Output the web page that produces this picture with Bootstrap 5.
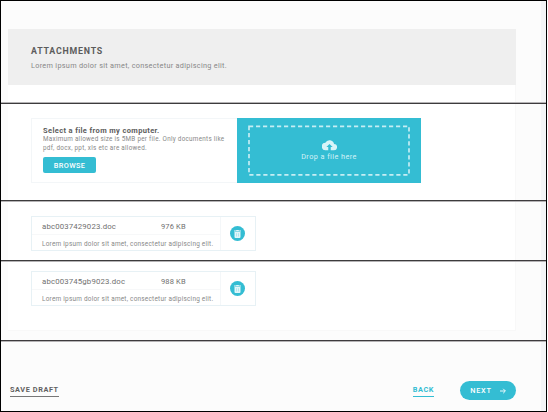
<!DOCTYPE html>
<html lang="en">
<head>
<meta charset="utf-8">
<meta name="viewport" content="width=device-width, initial-scale=1">
<title>Attachments</title>
<link href="https://cdn.jsdelivr.net/npm/bootstrap@5.3.0/dist/css/bootstrap.min.css" rel="stylesheet">
<style>
:root{--teal:#34bdd3;--soft:#888}
body{width:548px;height:412px;overflow:hidden;background:#fff;font-family:Roboto,"Liberation Sans",sans-serif;font-size:7px;line-height:9px;color:var(--soft)}
.frame{width:547px;height:412px;border:1px solid #000;background:#fcfcfc}
.band{padding-left:7px;border-right:5px solid #f3f5f7;white-space:nowrap}
.band-head{height:101px;padding-top:28px}
.band-pick{height:96px}
.band-first{height:58px}
.band-second{height:78px}
.band-foot{height:69px;padding:39px 25px 0 9px}
.rule{height:2px;background:#3d3b3d;border-bottom:1px solid #b5b3b5}
.rule-up{border-bottom:0;border-top:1px solid #b5b3b5}
.panel{width:508px;background:#fff;border-right:1px solid #f8f8f8;padding-left:23px}
.panel-gap{height:17px}
.panel-title{height:56px;width:508px;background:#efefef;padding:17px 0 0 23px}
.panel-title h1{font-size:8.8px;line-height:10px;font-weight:700;letter-spacing:.8px;color:#5c5c5c;margin:0 0 6px}
.panel-title p{font-size:7.3px;line-height:8px;letter-spacing:.29px}
.panel-pick{padding-top:14px}
.panel-file{padding-top:14px}
.panel-end{height:69px;padding-top:9px;border-bottom:1px solid #f8f8f8}
.pick{width:206px;height:65px;border:1px solid #f3f6f8;border-right:0;padding:7px 0 0 11px}
.pick h2{font-size:7.5px;line-height:9px;font-weight:700;letter-spacing:.36px;color:#5c5c5c;margin:0}
.pick p{font-size:6.3px;line-height:9px;letter-spacing:.28px}
.btn-teal{--bs-btn-bg:var(--teal);--bs-btn-color:#fff;--bs-btn-border-width:0;--bs-btn-hover-bg:#2aabc0;--bs-btn-hover-color:#fff;font-weight:500}
.btn-browse{width:53px;height:16px;border-radius:2px;margin-top:4px;font-size:7.3px;line-height:17px;letter-spacing:.4px}
.drop{width:184px;height:65px;background:var(--teal);color:#d5f2f7;padding:7px 11px}
.drop-edge{height:51px}
.drop-text{font-size:7.3px;line-height:11px;letter-spacing:.42px}
.file{width:225px;height:35px;border:1px solid #e7f1f5}
.file-info{width:189px;border-right:1px solid #f4f7f9}
.file-top{height:18px;border-bottom:1px solid #f7f8f9;padding-left:10px;font-size:7.5px;line-height:19px;letter-spacing:.15px;color:#707070}
.file-name{width:119px;font-size:7.8px}
.file-note{padding-left:10px;font-size:6.4px;line-height:18px;letter-spacing:.25px;height:15px}
.file-bin{padding-right:2px}
.btn-bin{width:15px;height:15px}
.foot-link{font-size:7.3px;line-height:9px;font-weight:700;text-decoration:none;border-bottom:1px solid #777;color:#606060;padding-bottom:2px;letter-spacing:.6px}
.foot-back{color:var(--teal);border-color:var(--teal);margin-right:26px}
.btn-next{width:56px;height:19px;font-size:7.3px;line-height:19px;letter-spacing:.75px}
</style>
<script src="https://cdn.jsdelivr.net/npm/bootstrap@5.3.0/dist/js/bootstrap.bundle.min.js"></script>
</head>
<body>
<main class="frame">
  <header class="band band-head">
    <div class="panel-title"><h1>ATTACHMENTS</h1><p class="m-0">Lorem ipsum dolor sit amet, consectetur adipiscing elit.</p></div>
    <div class="panel panel-gap"></div>
  </header>
  <div class="rule rule-up"></div>
  <section class="band band-pick">
    <div class="panel panel-pick h-100 d-flex align-items-start">
      <div class="pick">
        <h2>Select a file from my computer.</h2>
        <p class="m-0">Maximum allowed size is 5MB per file. Only documents like<br>pdf, docx, ppt, xls etc are allowed.</p>
        <button class="btn btn-teal btn-browse p-0 d-block">BROWSE</button>
      </div>
      <div class="drop">
        <div class="drop-edge position-relative d-flex flex-column align-items-center justify-content-center">
          <svg class="position-absolute top-0 start-0" width="162" height="51" fill="none" stroke="#c5edf4" stroke-width="1.7"><rect x="1" y="1.3" width="160" height="48.5" stroke-dasharray="4.2 2.8"/></svg>
          <svg width="15" height="11" viewBox="0 0 24 17" fill="#d9f4f8"><path d="M19.3 6A7.5 7.5 0 0 0 5.3 4 6 6 0 0 0 6 16h4v-5H7l5-5 5 5h-3v5h5a5 5 0 0 0 .3-10z"/></svg>
          <span class="drop-text">Drop a file here</span>
        </div>
      </div>
    </div>
  </section>
  <div class="rule"></div>
  <section class="band band-first">
    <div class="panel panel-file h-100">
      <div class="file d-flex">
        <div class="file-info"><div class="file-top d-flex"><span class="file-name">abc0037429023.doc</span><span>976 KB</span></div><div class="file-note">Lorem ipsum dolor sit amet, consectetur adipiscing elit.</div></div>
        <div class="file-bin flex-fill d-flex align-items-center justify-content-center"><button class="btn btn-teal btn-bin rounded-circle p-0 d-flex align-items-center justify-content-center" aria-label="Delete"><svg width="7" height="8" viewBox="0 0 7 8"><path d="M0 .5h2L2.5 0h2L5 .5h2v1H0zM.5 2h6v5q0 1-1 1h-4q-1 0-1-1z" fill="#e2f6f9"/><path d="M2.5 3.2v3.3M4.5 3.2v3.3" stroke="#8edce8" stroke-width=".6"/></svg></button></div>
      </div>
    </div>
  </section>
  <div class="rule"></div>
  <section class="band band-second">
    <div class="panel panel-end">
      <div class="file d-flex">
        <div class="file-info"><div class="file-top d-flex"><span class="file-name">abc003745gb9023.doc</span><span>988 KB</span></div><div class="file-note">Lorem ipsum dolor sit amet, consectetur adipiscing elit.</div></div>
        <div class="file-bin flex-fill d-flex align-items-center justify-content-center"><button class="btn btn-teal btn-bin rounded-circle p-0 d-flex align-items-center justify-content-center" aria-label="Delete"><svg width="7" height="8" viewBox="0 0 7 8"><path d="M0 .5h2L2.5 0h2L5 .5h2v1H0zM.5 2h6v5q0 1-1 1h-4q-1 0-1-1z" fill="#e2f6f9"/><path d="M2.5 3.2v3.3M4.5 3.2v3.3" stroke="#8edce8" stroke-width=".6"/></svg></button></div>
      </div>
    </div>
  </section>
  <div class="rule"></div>
  <footer class="band band-foot d-flex align-items-start">
    <a href="#" class="foot-link me-auto mt-1">SAVE DRAFT</a>
    <a href="#" class="foot-link foot-back mt-1">BACK</a>
    <button class="btn btn-teal btn-next rounded-pill p-0 d-flex align-items-center justify-content-center gap-2">NEXT<svg width="6" height="6" viewBox="0 0 6 6" fill="none" stroke="#fff" stroke-width=".9"><path d="M0 3h5.2M3.2.8 5.4 3 3.2 5.2"/></svg></button>
  </footer>
</main>
</body>
</html>
